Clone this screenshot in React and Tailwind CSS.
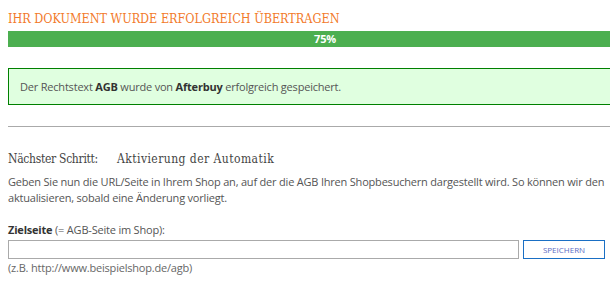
export default function App() {
  return (
    <div className="w-[610px] h-[287px] overflow-hidden bg-white">
      <div className="w-[634px] ml-[8px] text-[11px] tracking-[-0.2px] text-[#555] font-[family-name:'Open_Sans',sans-serif]">
        <h1 className="pt-[10px] h-[31px] text-[12.5px] leading-[18px] tracking-normal text-[#f27a2a] uppercase font-[family-name:'DejaVu_Serif_Condensed','DejaVu_Serif',serif]">
          Ihr Dokument wurde erfolgreich übertragen
        </h1>
        <div className="h-[16px] bg-[#4caf50] flex items-center justify-center text-white font-bold text-[11px] leading-[16px]">
          75%
        </div>
        <div className="mt-[21px] h-[37px] border border-[#008000] bg-[#e0ffe0] flex items-center pl-[11px] leading-[16px]">
          <span>
            Der Rechtstext <b className="text-[#333]">AGB</b> wurde von <b className="text-[#333]">Afterbuy</b> erfolgreich gespeichert.
          </span>
        </div>
        <div className="mt-[21px] h-px bg-[#aaa]" />
        <h2 className="mt-[22px] text-[12px] leading-[20px] text-[#444] flex gap-[19px] font-[family-name:'DejaVu_Serif_Condensed','DejaVu_Serif',serif]">
          <span className="tracking-[-0.3px]">Nächster Schritt:</span>
          <span className="tracking-[0.45px]">Aktivierung der Automatik</span>
        </h2>
        <p className="mt-[5px] leading-[16px]">
          Geben Sie nun die URL/Seite in Ihrem Shop an, auf der die AGB Ihren Shopbesuchern dargestellt wird. So können wir den aktualisieren, sobald eine Änderung vorliegt.
        </p>
        <div className="mt-[16px] leading-[16px]">
          <b className="text-[#333]">Zielseite</b> (= AGB-Seite im Shop):
        </div>
        <div className="mt-[2px] flex gap-[4px] items-start">
          <input className="w-[511px] h-[19px] border border-[#aaa] outline-none" />
          <button className="w-[82px] h-[19px] border border-[#1a6fc4] text-[#5b6cc4] text-[8px] leading-[17px] tracking-normal uppercase">
            Speichern
          </button>
        </div>
        <div className="mt-[1px] leading-[16px] text-[#666]">(z.B. http://www.beispielshop.de/agb)</div>
      </div>
    </div>
  );
}
